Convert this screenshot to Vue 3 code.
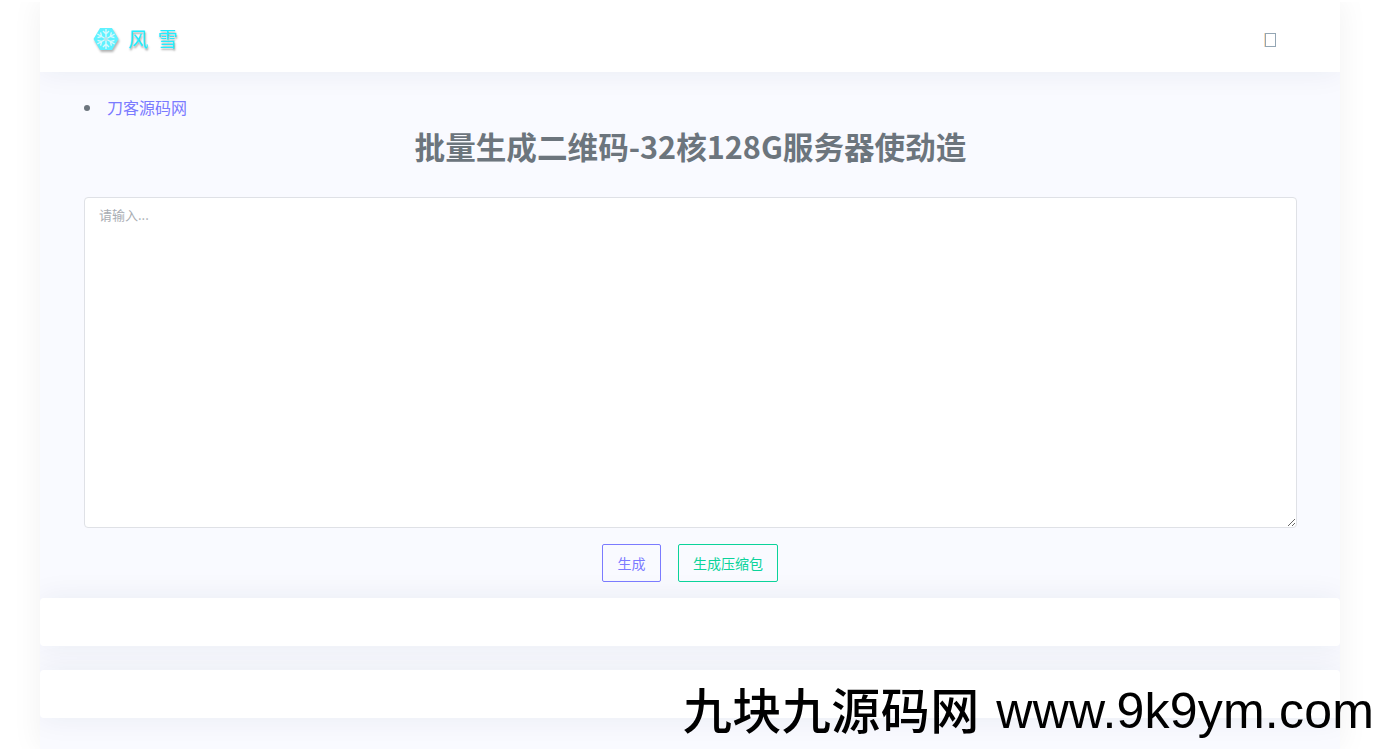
<script setup>
import { ref } from 'vue'

const content = ref('')
const snowArms = [0, 60, 120, 180, 240, 300]
</script>

<template>
  <div class="page">
    <header class="topbar">
      <div class="logo">
        <svg class="flake" width="26" height="26" viewBox="0 0 26 26">
          <polygon points="7,2 19,2 25.5,13 19,24 7,24 0.5,13" fill="#5ff2ff" />
          <g stroke="#d8f8fc" stroke-width="1.4" fill="none">
            <g v-for="a in snowArms" :key="a" :transform="`rotate(${a} 13 13)`">
              <path d="M13 13V3M10 5l3 3 3-3" />
            </g>
          </g>
          <circle cx="13" cy="13" r="2" fill="#b5e6ec" />
        </svg>
        <span class="logo-text">风 雪</span>
      </div>
      <span class="tofu"></span>
    </header>

    <main class="content">
      <ul class="links">
        <li><a href="#">刀客源码网</a></li>
      </ul>
      <h1>批量生成二维码-32核128G服务器使劲造</h1>
      <textarea v-model="content" placeholder="请输入..."></textarea>
      <div class="actions">
        <button class="btn btn-blue">生成</button>
        <button class="btn btn-green">生成压缩包</button>
      </div>
    </main>

    <section class="panel"></section>
    <section class="panel"></section>
  </div>
  <div class="watermark"><span class="wm-cn">九块九源码网</span> www.9k9ym.com</div>
</template>

<style>
html, body {
  margin: 0;
  background: #fff;
  overflow: hidden;
}
</style>

<style scoped>
.page {
  width: 1300px;
  height: 749px;
  margin-left: 40px;
  background: #f9faff;
  box-shadow: 0 0 30px rgba(0, 0, 0, 0.06);
  clip-path: inset(2px -40px 0 -40px);
  overflow: hidden;
  font-family: "Noto Sans CJK SC", "Liberation Sans", sans-serif;
}

.topbar {
  height: 72px;
  box-sizing: border-box;
  background: #fff;
  display: flex;
  align-items: center;
  justify-content: space-between;
  padding: 6px 64px 0 53px;
  box-shadow: 0 0 30px rgba(30, 40, 90, 0.07);
  position: relative;
}

.logo {
  display: flex;
  align-items: center;
  gap: 9px;
}

.flake {
  filter: drop-shadow(1px 2px 1px rgba(0, 0, 0, 0.3));
}

.logo-text {
  font-size: 20px;
  line-height: 26px;
  word-spacing: 5px;
  color: #22eeff;
  text-shadow: 1px 2px 2px rgba(0, 0, 0, 0.35);
}

.tofu {
  width: 9px;
  height: 12px;
  margin-top: 2px;
  border: 1px solid #93a6b4;
  box-shadow: -1px 0 0 #fbdcb8;
}

.content {
  height: 526px;
  box-sizing: border-box;
  padding: 24px 43px 0 44px;
}

.links {
  margin: 0;
  padding: 0;
  list-style: none;
  font-size: 16px;
  line-height: 22px;
}

.links li {
  display: flex;
  align-items: center;
  gap: 17px;
}

.links li::before {
  content: "";
  width: 6px;
  height: 6px;
  margin-top: 2px;
  border-radius: 50%;
  background: #6c757d;
}

.links a {
  color: #7b7bff;
  text-decoration: none;
}

h1 {
  margin: 8px 0 31px;
  text-align: center;
  font-size: 30.6px;
  line-height: 40px;
  font-weight: 700;
  color: #6c757d;
}

textarea {
  display: block;
  width: 100%;
  height: 331px;
  box-sizing: border-box;
  padding: 8px 14px;
  border: 1px solid #dfe1e6;
  border-radius: 4px;
  background: #fff;
  font-family: inherit;
  font-size: 13px;
  line-height: 18px;
  color: #6c757d;
  outline: none;
}

textarea::placeholder {
  color: #a9adb3;
}

.actions {
  display: flex;
  justify-content: center;
  gap: 17px;
  margin-top: 16px;
  padding-right: 1px;
}

.btn {
  height: 38px;
  padding: 0;
  background: transparent;
  border: 1px solid;
  border-radius: 2px;
  font-family: inherit;
  font-size: 14px;
  cursor: pointer;
}

.btn-blue {
  width: 59px;
  color: #7b7bff;
  border-color: #7b7bff;
}

.btn-green {
  width: 100px;
  color: #0bd39a;
  border-color: #0bd39a;
}

.panel {
  height: 48px;
  margin-bottom: 24px;
  background: #fff;
  border-radius: 4px;
  box-shadow: 0 0 30px rgba(30, 40, 90, 0.07);
}

.watermark {
  position: absolute;
  right: 11px;
  bottom: 9px;
  font-family: "Liberation Sans", "Noto Sans CJK SC", sans-serif;
  font-size: 50px;
  line-height: 58px;
  letter-spacing: 0.2px;
  color: #000;
  white-space: nowrap;
}

.wm-cn {
  margin-right: 2.5px;
  vertical-align: -1px;
  font-family: "Noto Sans CJK SC", sans-serif;
  font-size: 49px;
  font-weight: 500;
  letter-spacing: 0.5px;
}
</style>
